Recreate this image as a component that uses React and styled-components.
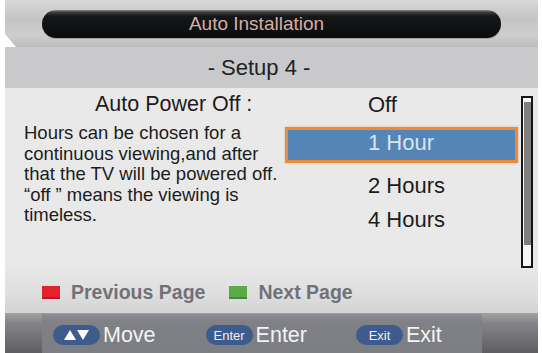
import styled, { createGlobalStyle } from 'styled-components';

const GlobalStyle = createGlobalStyle`
  html, body {
    margin: 0;
    padding: 0;
    background: #ffffff;
  }
  body {
    font-family: "Liberation Sans", Arial, sans-serif;
  }
`;

const Screen = styled.div`
  width: 542px;
  height: 353px;
  box-sizing: border-box;
  padding: 0 4px 0 5px;
  background: #ffffff;
  overflow: hidden;
`;

const Panel = styled.div`
  display: flex;
  flex-direction: column;
  height: 100%;
`;

const Header = styled.div`
  position: relative;
  flex: none;
  height: 47px;
  box-sizing: border-box;
  padding: 10px 37px 9px;
  background: linear-gradient(180deg, #d8d8d8 0%, #c4c4c4 40%, #cecece 75%, #bcbcbc 100%);

  &::after {
    content: '';
    position: absolute;
    left: 0;
    bottom: 0;
    border-style: solid;
    border-width: 13px 0 0 11px;
    border-color: transparent transparent transparent #ffffff;
  }
`;

const TitlePill = styled.div`
  height: 28px;
  border-radius: 14px;
  display: flex;
  align-items: center;
  justify-content: center;
  padding-right: 30px;
  background: linear-gradient(180deg, #8a8c8c 0px, #3e4242 2px, #141818 6px, #0a0c0c 100%);
  box-shadow: 0 1px 0 rgba(150, 150, 150, 0.8);
  color: #d9aca4;
  font-size: 19px;
`;

const StepBand = styled.div`
  flex: none;
  height: 41px;
  display: flex;
  align-items: center;
  justify-content: center;
  padding-right: 25px;
  background: #c9c9cb;
  color: #222222;
  font-size: 22px;
`;

const Content = styled.div`
  flex: none;
  height: 180px;
  display: grid;
  grid-template-columns: 277px 233px 12px;
  column-gap: 3px;
  background: #e9e9e9;
`;

const Description = styled.div`
  padding-left: 19px;
  color: #1c1c1c;
`;

const FieldLabel = styled.div`
  height: 33px;
  line-height: 33px;
  padding-left: 71px;
  font-size: 21.5px;
`;

const HelpText = styled.p`
  margin: 2px 0 0;
  font-size: 18.5px;
  line-height: 20.5px;
  white-space: nowrap;
`;

const Options = styled.div`
  display: flex;
  flex-direction: column;
`;

const Option = styled.div`
  height: ${(p) => (p.$first ? 33 : 34)}px;
  line-height: ${(p) => (p.$first ? 33 : 34)}px;
  padding-left: 83px;
  font-size: 22px;
  color: #1c1c1c;
`;

const SelectedOption = styled.div`
  margin: 6px 0;
  height: 36px;
  box-sizing: border-box;
  border: 3px solid #ea8a3a;
  box-shadow: 0 0 2px rgba(240, 150, 80, 0.7);
  background: #5585b6;
  padding: 0 0 5px 80px;
  line-height: 25px;
  font-size: 22px;
  color: #d6e5f3;
`;

const Scrollbar = styled.div`
  margin-top: 8px;
  box-sizing: border-box;
  border: 2px solid #161616;
  background: #f6f6f6;
  padding: 4px 0 21px;
  display: flex;
`;

const ScrollThumb = styled.div`
  flex: 1;
  margin: 0 0.5px;
  background: #7f7f7f;
`;

const Legend = styled.div`
  flex: none;
  height: 45px;
  display: flex;
  align-items: center;
  padding: 4px 0 0 37px;
  box-sizing: border-box;
  background: linear-gradient(180deg, #e7e7e7 0%, #e0e0e0 50%, #d3d3d3 100%);
`;

const LegendItem = styled.div`
  display: flex;
  align-items: center;
  gap: 11px;
  margin-right: 24px;
  color: #717178;
  font-size: 19.5px;
  font-weight: 700;
`;

const ColorKey = styled.span`
  width: 18px;
  height: 13px;
  background: ${(p) => p.$color};
  box-shadow: inset 0 -2px 0 rgba(0, 0, 0, 0.2);
`;

const BottomBar = styled.div`
  flex: 1;
  display: flex;
  background: linear-gradient(180deg, #a2a2a4 0%, #858589 25%, #6e6e72 70%, #5e5e62 100%);
`;

const Side = styled.div`
  width: ${(p) => p.$width}px;
`;

const HelpPanel = styled.div`
  flex: 1;
  display: flex;
  align-items: center;
  padding: 3px 0 0 11px;
  background: linear-gradient(180deg, #8c8d91 0%, #808187 20%, #7d7e84 100%);
  border-top: 1px solid #9c9da1;
`;

const HelpItem = styled.div`
  display: flex;
  align-items: center;
  gap: 3px;
  margin-right: ${(p) => p.$gap}px;
  color: #f4f4f4;
  font-size: 21.5px;
`;

const KeyPill = styled.span`
  width: 47px;
  height: 20px;
  border-radius: 10px;
  background: #3d5b8c;
  display: flex;
  align-items: center;
  justify-content: center;
  color: #f0f0f0;
  font-size: 13px;
`;

const ArrowIcon = () => (
  <svg width="26" height="10" viewBox="0 0 26 10">
    <polygon points="0,10 6,0 12,10" fill="#ffffff" />
    <polygon points="13,0 25,0 19,10" fill="#ffffff" />
  </svg>
);

const App = () => (
  <>
    <GlobalStyle />
    <Screen>
      <Panel>
        <Header>
          <TitlePill>Auto Installation</TitlePill>
        </Header>
        <StepBand>- Setup 4 -</StepBand>
        <Content>
          <Description>
            <FieldLabel>Auto Power Off :</FieldLabel>
            <HelpText>
              Hours can be chosen for a
              <br />
              continuous viewing,and after
              <br />
              that the TV will be powered off.
              <br />
              “off ” means the viewing is
              <br />
              timeless.
            </HelpText>
          </Description>
          <Options>
            <Option $first>Off</Option>
            <SelectedOption>1 Hour</SelectedOption>
            <Option>2 Hours</Option>
            <Option>4 Hours</Option>
          </Options>
          <Scrollbar>
            <ScrollThumb />
          </Scrollbar>
        </Content>
        <Legend>
          <LegendItem>
            <ColorKey $color="#e3232b" />
            Previous Page
          </LegendItem>
          <LegendItem>
            <ColorKey $color="#5aaa46" />
            Next Page
          </LegendItem>
        </Legend>
        <BottomBar>
          <Side $width={37} />
          <HelpPanel>
            <HelpItem $gap={50}>
              <KeyPill>
                <ArrowIcon />
              </KeyPill>
              Move
            </HelpItem>
            <HelpItem $gap={49}>
              <KeyPill>Enter</KeyPill>
              Enter
            </HelpItem>
            <HelpItem $gap={0}>
              <KeyPill>Exit</KeyPill>
              Exit
            </HelpItem>
          </HelpPanel>
          <Side $width={56} />
        </BottomBar>
      </Panel>
    </Screen>
  </>
);

export default App;
